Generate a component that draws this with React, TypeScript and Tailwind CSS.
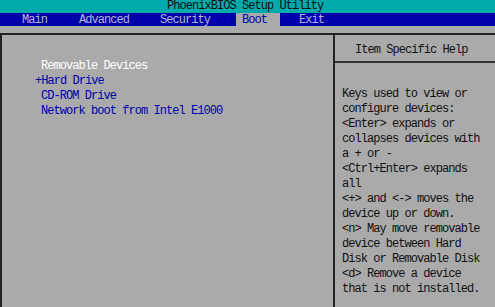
import React from "react";

const helpLines = [
  "Keys used to view or",
  "configure devices:",
  "<Enter> expands or",
  "collapses devices with",
  "a + or -",
  "<Ctrl+Enter> expands",
  "all",
  "<+> and <-> moves the",
  "device up or down.",
  "<n> May move removable",
  "device between Hard",
  "Disk or Removable Disk",
  "<d> Remove a device",
  "that is not installed.",
];

export default function App() {
  return (
    <div
      className="w-[495px] h-[307px] overflow-hidden bg-[#aaaaaa] flex flex-col text-[12px] tracking-[-0.95px] whitespace-pre"
      style={{ fontFamily: '"Liberation Mono", "DejaVu Sans Mono", monospace' }}
    >
      {/* title bar */}
      <div className="h-[13px] bg-[#00aaaa] text-[#101010] pl-[167px] leading-[12px]">
        PhoenixBIOS Setup Utility
      </div>

      {/* menu bar */}
      <div className="h-[13px] bg-[#0000aa] text-[#b4b4d8] flex leading-[14px] pl-[22px]">
        <span className="w-[57px]">Main</span>
        <span className="w-[81px]">Advanced</span>
        <span className="w-[76px]">Security</span>
        <span className="w-[44px] bg-[#aaaaaa] text-[#0000aa] pl-[6px]">Boot</span>
        <span className="pl-[19px]">Exit</span>
      </div>

      <div className="h-[7px]" />

      {/* body */}
      <div className="flex-1 flex border-t-2 border-l-2 border-[#222222]">
        <div className="w-[331px] pt-[24px] pl-[33px] flex flex-col leading-[15px]">
          <span className="text-white pl-[6px]">Removable Devices</span>
          <span className="text-[#0000aa]">+Hard Drive</span>
          <span className="text-[#0000aa] pl-[6px]">CD-ROM Drive</span>
          <span className="text-[#0000aa] pl-[6px]">Network boot from Intel E1000</span>
        </div>
        <div className="flex-1 border-l-2 border-[#222222] flex flex-col text-[#111111]">
          <div className="h-[28px] border-b-2 border-[#333333] pl-[20px] pt-[8px] leading-[15px]">
            Item Specific Help
          </div>
          <div className="pl-[7px] pt-[24px] flex flex-col leading-[15px]">
            {helpLines.map((l) => (
              <span key={l}>{l}</span>
            ))}
          </div>
        </div>
      </div>
    </div>
  );
}
